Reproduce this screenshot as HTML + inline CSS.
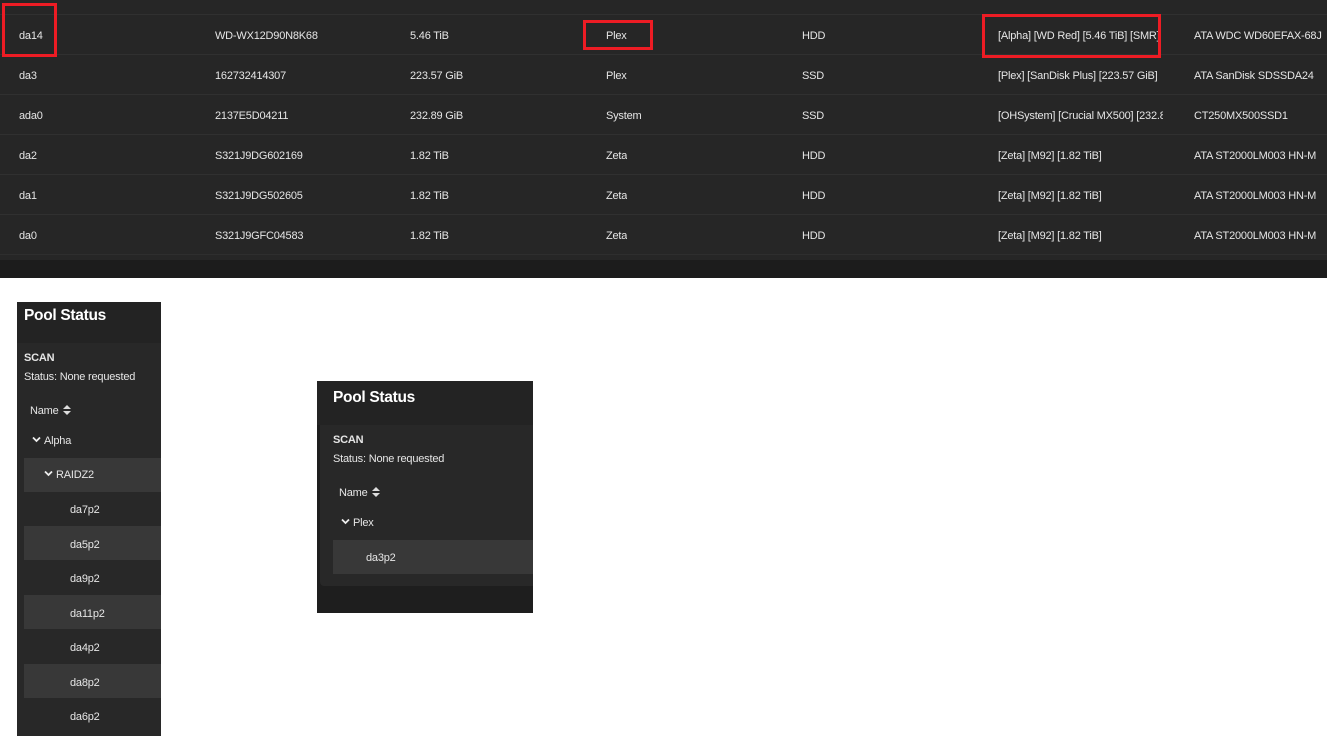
<!DOCTYPE html>
<html><head><meta charset="utf-8"><style>
*{margin:0;padding:0;box-sizing:border-box}
body{width:1327px;height:736px;background:#fff;position:relative;overflow:hidden;font-family:"Liberation Sans",sans-serif;font-size:11px;color:#e6e6e6;letter-spacing:-0.2px}
.tbl{position:absolute;left:0;top:0;width:1327px;height:278px;background:#1c1c1c}
.tb{position:absolute;left:0;top:0;width:1327px;height:260px;background:#262626}
.row{position:absolute;left:0;width:1327px;height:40px;border-top:1px solid #303030}
.row span{position:absolute;top:15px;white-space:nowrap;overflow:hidden}
.red{position:absolute;border:3px solid #ed1c24}
.panel{position:absolute;background:#282828}
.ph{position:absolute;left:0;top:0;right:0;background:#232323;font-size:15.5px;font-weight:bold;color:#fff;letter-spacing:-0.3px}
.t{position:absolute;white-space:nowrap}
.b{font-weight:bold}
.r{position:absolute;height:34px}
.alt{background:#383838}
svg.c{width:9px;height:7px;margin-right:3px;vertical-align:1px}
</style></head><body>
<div class="tbl"><div class="tb">
<div class="row" style="top:14px"><span style="left:19px">da14</span><span style="left:215px">WD-WX12D90N8K68</span><span style="left:410px">5.46 TiB</span><span style="left:606px">Plex</span><span style="left:802px">HDD</span><span style="left:998px;width:166px">[Alpha] [WD Red] [5.46 TiB] [SMR]</span><span style="left:1194px">ATA WDC WD60EFAX-68J</span></div>
<div class="row" style="top:54px"><span style="left:19px">da3</span><span style="left:215px">162732414307</span><span style="left:410px">223.57 GiB</span><span style="left:606px">Plex</span><span style="left:802px">SSD</span><span style="left:998px;width:166px">[Plex] [SanDisk Plus] [223.57 GiB]</span><span style="left:1194px">ATA SanDisk SDSSDA24</span></div>
<div class="row" style="top:94px"><span style="left:19px">ada0</span><span style="left:215px">2137E5D04211</span><span style="left:410px">232.89 GiB</span><span style="left:606px">System</span><span style="left:802px">SSD</span><span style="left:998px;width:165px">[OHSystem] [Crucial MX500] [232.89 GiB]</span><span style="left:1194px">CT250MX500SSD1</span></div>
<div class="row" style="top:134px"><span style="left:19px">da2</span><span style="left:215px">S321J9DG602169</span><span style="left:410px">1.82 TiB</span><span style="left:606px">Zeta</span><span style="left:802px">HDD</span><span style="left:998px">[Zeta] [M92] [1.82 TiB]</span><span style="left:1194px">ATA ST2000LM003 HN-M</span></div>
<div class="row" style="top:174px"><span style="left:19px">da1</span><span style="left:215px">S321J9DG502605</span><span style="left:410px">1.82 TiB</span><span style="left:606px">Zeta</span><span style="left:802px">HDD</span><span style="left:998px">[Zeta] [M92] [1.82 TiB]</span><span style="left:1194px">ATA ST2000LM003 HN-M</span></div>
<div class="row" style="top:214px;height:46px"><span style="left:19px">da0</span><span style="left:215px">S321J9GFC04583</span><span style="left:410px">1.82 TiB</span><span style="left:606px">Zeta</span><span style="left:802px">HDD</span><span style="left:998px">[Zeta] [M92] [1.82 TiB]</span><span style="left:1194px">ATA ST2000LM003 HN-M</span></div>
<div class="row" style="top:254px;height:6px;border-color:#2e2e2e"></div>
</div></div>
<div class="red" style="left:2px;top:3px;width:55px;height:54px"></div>
<div class="red" style="left:583px;top:20px;width:70px;height:30px"></div>
<div class="red" style="left:982px;top:14px;width:179px;height:44px"></div>

<div class="panel" style="left:17px;top:302px;width:144px;height:434px">
<div class="ph" style="height:41px"><span class="t" style="left:7px;top:5px">Pool Status</span></div>
<span class="t b" style="left:7px;top:50px">SCAN</span>
<span class="t" style="left:7px;top:69px">Status: None requested</span>
<span class="t" style="left:13px;top:103px">Name <svg width="8" height="10" viewBox="0 0 8 10" style="vertical-align:-1px;margin-left:2px"><path d="M4 0L8 4H0z M4 10L0 6H8z" fill="#ddd"/></svg></span>
<span class="t" style="left:15px;top:133px"><svg class="c" viewBox="0 0 9 7"><path d="M1 1.5L4.5 5L8 1.5" stroke="#eee" stroke-width="1.8" fill="none"/></svg>Alpha</span>
<div class="r alt" style="left:7px;top:156px;width:137px"><span class="t" style="left:20px;top:11px"><svg class="c" viewBox="0 0 9 7"><path d="M1 1.5L4.5 5L8 1.5" stroke="#eee" stroke-width="1.8" fill="none"/></svg>RAIDZ2</span></div>
<span class="t" style="left:53px;top:202px">da7p2</span>
<div class="r alt" style="left:7px;top:224px;width:137px"><span class="t" style="left:46px;top:13px">da5p2</span></div>
<span class="t" style="left:53px;top:271px">da9p2</span>
<div class="r alt" style="left:7px;top:293px;width:137px"><span class="t" style="left:46px;top:13px">da11p2</span></div>
<span class="t" style="left:53px;top:340px">da4p2</span>
<div class="r alt" style="left:7px;top:362px;width:137px"><span class="t" style="left:46px;top:13px">da8p2</span></div>
<span class="t" style="left:53px;top:409px">da6p2</span>
</div>

<div class="panel" style="left:317px;top:381px;width:216px;height:232px;background:#1e1e1e">
<div style="position:absolute;left:3px;top:0;right:0;height:205px;background:#282828;border-radius:0 0 0 4px"></div>
<div class="ph" style="left:0;height:44px"><span class="t" style="left:16px;top:8px">Pool Status</span></div>
<span class="t b" style="left:16px;top:53px">SCAN</span>
<span class="t" style="left:16px;top:72px">Status: None requested</span>
<span class="t" style="left:22px;top:106px">Name <svg width="8" height="10" viewBox="0 0 8 10" style="vertical-align:-1px;margin-left:2px"><path d="M4 0L8 4H0z M4 10L0 6H8z" fill="#ddd"/></svg></span>
<span class="t" style="left:24px;top:136px"><svg class="c" viewBox="0 0 9 7"><path d="M1 1.5L4.5 5L8 1.5" stroke="#eee" stroke-width="1.8" fill="none"/></svg>Plex</span>
<div class="r alt" style="left:16px;top:159px;width:200px"><span class="t" style="left:33px;top:12px">da3p2</span></div>
</div>
</body></html>
